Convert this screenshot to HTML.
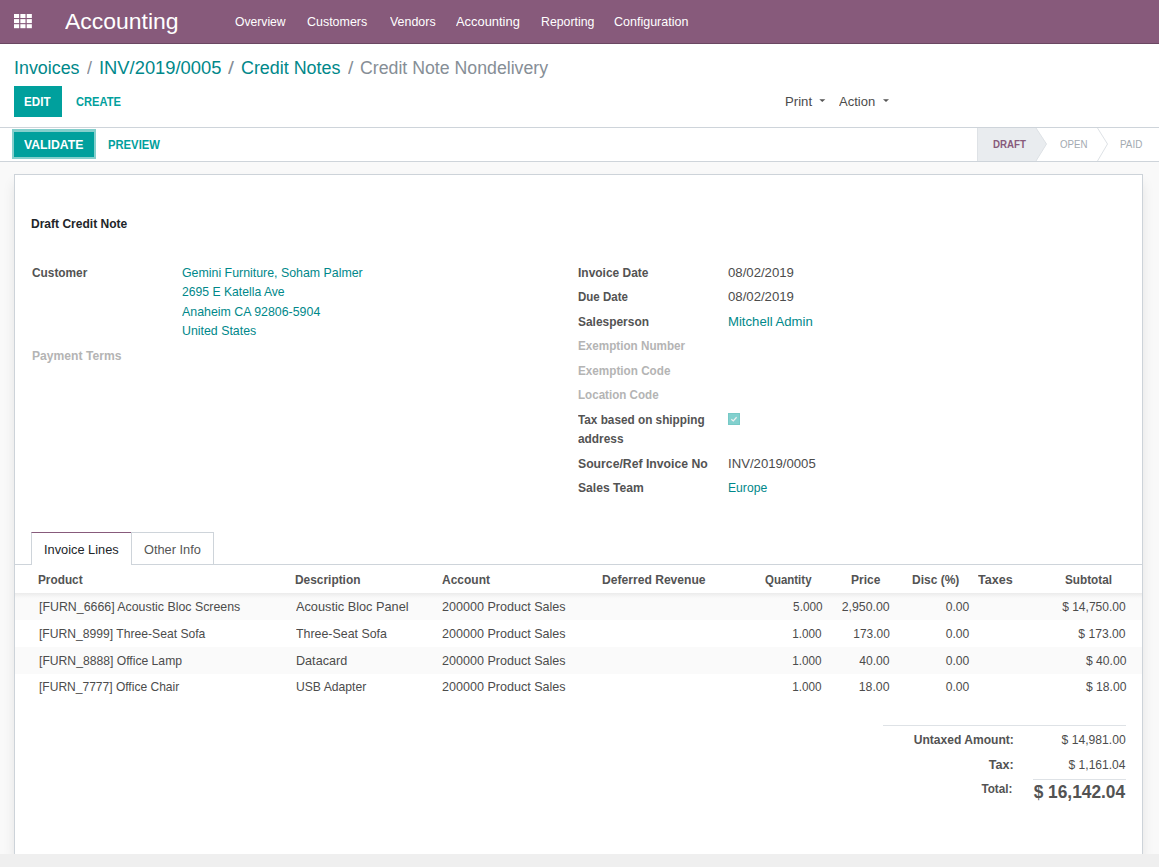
<!DOCTYPE html>
<html><head><meta charset="utf-8"><title>Accounting</title>
<style>
html,body{margin:0;padding:0;}
body{width:1159px;height:867px;overflow:hidden;position:relative;background:#fff;font-family:"Liberation Sans",sans-serif;}
.t{position:absolute;white-space:nowrap;}
.b{position:absolute;}
</style></head><body>
<!-- navbar -->
<div class="b" style="left:0;top:0;width:1159px;height:43px;background:#875A7B;border-bottom:1px solid #6a4762;"></div>
<svg class="b" style="left:14px;top:14px" width="19" height="15" viewBox="0 0 19 15">
<g fill="#fff"><rect x="0.00" y="0.0" width="5.15" height="4"/><rect x="6.35" y="0.0" width="5.15" height="4"/><rect x="12.70" y="0.0" width="5.15" height="4"/><rect x="0.00" y="5.1" width="5.15" height="4"/><rect x="6.35" y="5.1" width="5.15" height="4"/><rect x="12.70" y="5.1" width="5.15" height="4"/><rect x="0.00" y="10.2" width="5.15" height="4"/><rect x="6.35" y="10.2" width="5.15" height="4"/><rect x="12.70" y="10.2" width="5.15" height="4"/></g></svg>
<!-- control panel -->
<div class="b" style="left:14px;top:86px;width:48px;height:31px;background:#00A09D;"></div>
<div class="b" style="left:0;top:127px;width:1159px;height:1px;background:#ced4da;"></div>
<svg class="b" style="left:818px;top:98px" width="80" height="6" viewBox="0 0 80 6">
<path d="M1.3 1.2 L7.3 1.2 L4.3 4.1 Z" fill="#555"/>
<path d="M65 1.2 L71 1.2 L68 4.1 Z" fill="#555"/>
</svg>
<!-- statusbar -->
<div class="b" style="left:12px;top:129px;width:84px;height:30px;background:#84cfcc;"></div>
<div class="b" style="left:14px;top:132px;width:80px;height:25px;background:#00A09D;"></div>
<div class="b" style="left:0;top:161px;width:1159px;height:1px;background:#ced4da;"></div>
<svg class="b" style="left:960px;top:128px" width="199" height="33" viewBox="0 0 199 33">
<path d="M17.5 0 L76 0 L86.5 16 L76 33 L17.5 33 Z" fill="#e9ecef"/>
<path d="M17.5 0 L17.5 33" stroke="#dee2e6" stroke-width="1"/>
<path d="M76 0 L86.5 16 L76 33" fill="none" stroke="#dde1e5" stroke-width="1"/>
<path d="M137.5 0 L147.5 16 L137.5 33" fill="none" stroke="#dee2e6" stroke-width="1"/>
</svg>
<!-- sheet bg -->
<div class="b" style="left:0;top:162px;width:1159px;height:692px;background:#f9f9f9;"></div>
<div class="b" style="left:14px;top:174px;width:1127px;height:680px;background:#fff;border:1px solid #cdd3d9;border-bottom:none;box-shadow:0 8px 12px -1px rgba(0,0,0,0.1);"></div>
<div class="b" style="left:0;top:854px;width:1159px;height:13px;background:#efefef;"></div>
<!-- checkbox -->
<svg class="b" style="left:728px;top:413px" width="12" height="12" viewBox="0 0 12 12">
<rect x="0.5" y="0.5" width="11" height="11" fill="#82d0ce" stroke="#76c9c6" stroke-width="1"/>
<path d="M3.3 6.3 L5.3 7.9 L8.6 4.3" fill="none" stroke="#f0f0f0" stroke-width="1.3"/>
</svg>
<!-- tabs -->
<div class="b" style="left:15px;top:564px;width:1127px;height:1px;background:#ced4da;"></div>
<div class="b" style="left:31px;top:532px;width:99px;height:32px;background:#fff;border:1px solid #ced4da;border-top:1px solid #875A7B;border-bottom:none;height:32px;"></div>
<div class="b" style="left:131px;top:532px;width:82px;height:32px;border:1px solid #ced4da;border-left:none;border-bottom:none;"></div>
<!-- table -->
<div class="b" style="left:15px;top:593px;width:1127px;height:27px;background:linear-gradient(#ebebeb 0px,#f7f7f7 4px,#fafafa 6px,#fafafa 27px);"></div>
<div class="b" style="left:15px;top:646.5px;width:1127px;height:27px;background:#fafafa;"></div>
<!-- totals -->
<div class="b" style="left:883px;top:725px;width:243px;height:1px;background:#dee2e6;"></div>
<div class="b" style="left:1033px;top:779px;width:93px;height:1px;background:#dee2e6;"></div>
<div class="t" style="top:11.08px;font-size:22px;line-height:22px;color:#fff;left:65.20px;transform-origin:0 0;transform:scaleX(1.0428);">Accounting</div>
<div class="t" style="top:15.20px;font-size:13px;line-height:13px;color:#fff;left:235.40px;transform-origin:0 0;transform:scaleX(0.9341);">Overview</div>
<div class="t" style="top:15.20px;font-size:13px;line-height:13px;color:#fff;left:307.40px;transform-origin:0 0;transform:scaleX(0.9581);">Customers</div>
<div class="t" style="top:15.20px;font-size:13px;line-height:13px;color:#fff;left:389.60px;transform-origin:0 0;transform:scaleX(0.9560);">Vendors</div>
<div class="t" style="top:15.20px;font-size:13px;line-height:13px;color:#fff;left:456.20px;transform-origin:0 0;transform:scaleX(0.9924);">Accounting</div>
<div class="t" style="top:15.20px;font-size:13px;line-height:13px;color:#fff;left:540.60px;transform-origin:0 0;transform:scaleX(0.9466);">Reporting</div>
<div class="t" style="top:15.20px;font-size:13px;line-height:13px;color:#fff;left:614.40px;transform-origin:0 0;transform:scaleX(0.9619);">Configuration</div>
<div class="t" style="top:58.56px;font-size:18px;line-height:18px;color:#00888A;left:13.60px;transform-origin:0 0;transform:scaleX(0.9917);">Invoices</div>
<div class="t" style="top:58.56px;font-size:18px;line-height:18px;color:#868e96;left:87.00px;transform-origin:0 0;transform:scaleX(0.9921);">/</div>
<div class="t" style="top:58.56px;font-size:18px;line-height:18px;color:#00888A;left:98.80px;transform-origin:0 0;transform:scaleX(1.0192);">INV/2019/0005</div>
<div class="t" style="top:58.56px;font-size:18px;line-height:18px;color:#868e96;left:228.00px;transform-origin:0 0;transform:scaleX(1.1905);">/</div>
<div class="t" style="top:58.56px;font-size:18px;line-height:18px;color:#00888A;left:241.40px;transform-origin:0 0;transform:scaleX(0.9937);">Credit Notes</div>
<div class="t" style="top:58.56px;font-size:18px;line-height:18px;color:#868e96;left:347.60px;transform-origin:0 0;transform:scaleX(1.0738);">/</div>
<div class="t" style="top:58.56px;font-size:18px;line-height:18px;color:#868e96;left:360.40px;transform-origin:0 0;transform:scaleX(0.9843);">Credit Note Nondelivery</div>
<div class="t" style="top:95.20px;font-size:13px;line-height:13px;color:#fff;font-weight:bold;left:24.40px;transform-origin:0 0;transform:scaleX(0.8949);">EDIT</div>
<div class="t" style="top:95.20px;font-size:13px;line-height:13px;color:#00A09D;font-weight:bold;left:76.40px;transform-origin:0 0;transform:scaleX(0.8561);">CREATE</div>
<div class="t" style="top:94.80px;font-size:13px;line-height:13px;color:#4c4c4c;left:785.40px;transform-origin:0 0;transform:scaleX(1.0128);">Print</div>
<div class="t" style="top:94.80px;font-size:13px;line-height:13px;color:#4c4c4c;left:839.20px;transform-origin:0 0;transform:scaleX(1.0019);">Action</div>
<div class="t" style="top:138.00px;font-size:13px;line-height:13px;color:#fff;font-weight:bold;left:24.20px;transform-origin:0 0;transform:scaleX(0.9414);">VALIDATE</div>
<div class="t" style="top:138.00px;font-size:13px;line-height:13px;color:#00A09D;font-weight:bold;left:107.80px;transform-origin:0 0;transform:scaleX(0.8651);">PREVIEW</div>
<div class="t" style="top:139.27px;font-size:11.5px;line-height:11.5px;color:#875A7B;font-weight:bold;left:993.40px;transform-origin:0 0;transform:scaleX(0.8465);">DRAFT</div>
<div class="t" style="top:139.27px;font-size:11.5px;line-height:11.5px;color:#a3aab1;left:1059.60px;transform-origin:0 0;transform:scaleX(0.8424);">OPEN</div>
<div class="t" style="top:139.27px;font-size:11.5px;line-height:11.5px;color:#a3aab1;left:1120.20px;transform-origin:0 0;transform:scaleX(0.8606);">PAID</div>
<div class="t" style="top:216.90px;font-size:13px;line-height:13px;color:#212529;font-weight:bold;left:31.20px;transform-origin:0 0;transform:scaleX(0.9250);">Draft Credit Note</div>
<div class="t" style="top:265.70px;font-size:13px;line-height:13px;color:#535353;font-weight:bold;left:31.60px;transform-origin:0 0;transform:scaleX(0.9118);">Customer</div>
<div class="t" style="top:348.60px;font-size:13px;line-height:13px;color:#b4b4b4;font-weight:bold;left:31.60px;transform-origin:0 0;transform:scaleX(0.9331);">Payment Terms</div>
<div class="t" style="top:265.70px;font-size:13px;line-height:13px;color:#00888A;left:181.60px;transform-origin:0 0;transform:scaleX(0.9508);">Gemini Furniture, Soham Palmer</div>
<div class="t" style="top:284.70px;font-size:13px;line-height:13px;color:#00888A;left:181.60px;transform-origin:0 0;transform:scaleX(0.9363);">2695 E Katella Ave</div>
<div class="t" style="top:304.60px;font-size:13px;line-height:13px;color:#00888A;left:181.60px;transform-origin:0 0;transform:scaleX(0.9517);">Anaheim CA 92806-5904</div>
<div class="t" style="top:323.50px;font-size:13px;line-height:13px;color:#00888A;left:181.60px;transform-origin:0 0;transform:scaleX(0.9513);">United States</div>
<div class="t" style="top:266.20px;font-size:13px;line-height:13px;color:#535353;font-weight:bold;left:578.40px;transform-origin:0 0;transform:scaleX(0.9201);">Invoice Date</div>
<div class="t" style="top:290.30px;font-size:13px;line-height:13px;color:#535353;font-weight:bold;left:578.40px;transform-origin:0 0;transform:scaleX(0.8848);">Due Date</div>
<div class="t" style="top:315.00px;font-size:13px;line-height:13px;color:#535353;font-weight:bold;left:578.40px;transform-origin:0 0;transform:scaleX(0.9179);">Salesperson</div>
<div class="t" style="top:339.30px;font-size:13px;line-height:13px;color:#b4b4b4;font-weight:bold;left:578.40px;transform-origin:0 0;transform:scaleX(0.8984);">Exemption Number</div>
<div class="t" style="top:364.00px;font-size:13px;line-height:13px;color:#b4b4b4;font-weight:bold;left:578.40px;transform-origin:0 0;transform:scaleX(0.9013);">Exemption Code</div>
<div class="t" style="top:387.80px;font-size:13px;line-height:13px;color:#b4b4b4;font-weight:bold;left:578.40px;transform-origin:0 0;transform:scaleX(0.8928);">Location Code</div>
<div class="t" style="top:412.60px;font-size:13px;line-height:13px;color:#535353;font-weight:bold;left:578.40px;transform-origin:0 0;transform:scaleX(0.9054);">Tax based on shipping</div>
<div class="t" style="top:432.30px;font-size:13px;line-height:13px;color:#535353;font-weight:bold;left:578.40px;transform-origin:0 0;transform:scaleX(0.9136);">address</div>
<div class="t" style="top:457.00px;font-size:13px;line-height:13px;color:#535353;font-weight:bold;left:578.40px;transform-origin:0 0;transform:scaleX(0.9400);">Source/Ref Invoice No</div>
<div class="t" style="top:481.20px;font-size:13px;line-height:13px;color:#535353;font-weight:bold;left:578.40px;transform-origin:0 0;transform:scaleX(0.9322);">Sales Team</div>
<div class="t" style="top:266.20px;font-size:13px;line-height:13px;color:#4c4c4c;left:728.20px;transform-origin:0 0;transform:scaleX(1.0132);">08/02/2019</div>
<div class="t" style="top:290.30px;font-size:13px;line-height:13px;color:#4c4c4c;left:728.20px;transform-origin:0 0;transform:scaleX(1.0132);">08/02/2019</div>
<div class="t" style="top:315.00px;font-size:13px;line-height:13px;color:#00888A;left:727.60px;transform-origin:0 0;transform:scaleX(1.0110);">Mitchell Admin</div>
<div class="t" style="top:457.00px;font-size:13px;line-height:13px;color:#4c4c4c;left:727.60px;transform-origin:0 0;transform:scaleX(1.0115);">INV/2019/0005</div>
<div class="t" style="top:481.20px;font-size:13px;line-height:13px;color:#00888A;left:727.60px;transform-origin:0 0;transform:scaleX(0.9349);">Europe</div>
<div class="t" style="top:543.20px;font-size:13px;line-height:13px;color:#212529;left:44.22px;transform-origin:0 0;transform:scaleX(0.9836);">Invoice Lines</div>
<div class="t" style="top:543.20px;font-size:13px;line-height:13px;color:#555;left:144.12px;transform-origin:0 0;transform:scaleX(0.9837);">Other Info</div>
<div class="t" style="top:573.40px;font-size:13px;line-height:13px;color:#535353;font-weight:bold;left:38.20px;transform-origin:0 0;transform:scaleX(0.9078);">Product</div>
<div class="t" style="top:573.40px;font-size:13px;line-height:13px;color:#535353;font-weight:bold;left:295.40px;transform-origin:0 0;transform:scaleX(0.9154);">Description</div>
<div class="t" style="top:573.40px;font-size:13px;line-height:13px;color:#535353;font-weight:bold;left:442.40px;transform-origin:0 0;transform:scaleX(0.9223);">Account</div>
<div class="t" style="top:573.40px;font-size:13px;line-height:13px;color:#535353;font-weight:bold;left:602.20px;transform-origin:0 0;transform:scaleX(0.9310);">Deferred Revenue</div>
<div class="t" style="top:573.40px;font-size:13px;line-height:13px;color:#535353;font-weight:bold;left:765.40px;transform-origin:0 0;transform:scaleX(0.8820);">Quantity</div>
<div class="t" style="top:573.40px;font-size:13px;line-height:13px;color:#535353;font-weight:bold;left:850.60px;transform-origin:0 0;transform:scaleX(0.9235);">Price</div>
<div class="t" style="top:573.40px;font-size:13px;line-height:13px;color:#535353;font-weight:bold;left:912.40px;transform-origin:0 0;transform:scaleX(0.9232);">Disc (%)</div>
<div class="t" style="top:573.40px;font-size:13px;line-height:13px;color:#535353;font-weight:bold;left:978.20px;transform-origin:0 0;transform:scaleX(0.9660);">Taxes</div>
<div class="t" style="top:573.40px;font-size:13px;line-height:13px;color:#535353;font-weight:bold;left:1065.20px;transform-origin:0 0;transform:scaleX(0.9038);">Subtotal</div>
<div class="t" style="top:599.90px;font-size:13px;line-height:13px;color:#4c4c4c;left:38.60px;transform-origin:0 0;transform:scaleX(0.9507);">[FURN_6666] Acoustic Bloc Screens</div>
<div class="t" style="top:599.90px;font-size:13px;line-height:13px;color:#4c4c4c;left:295.60px;transform-origin:0 0;transform:scaleX(0.9803);">Acoustic Bloc Panel</div>
<div class="t" style="top:599.90px;font-size:13px;line-height:13px;color:#4c4c4c;left:442.40px;transform-origin:0 0;transform:scaleX(0.9663);">200000 Product Sales</div>
<div class="t" style="top:599.90px;font-size:13px;line-height:13px;color:#4c4c4c;right:336.37px;transform-origin:100% 0;transform:scaleX(0.9049);">5.000</div>
<div class="t" style="top:599.90px;font-size:13px;line-height:13px;color:#4c4c4c;right:268.97px;transform-origin:100% 0;transform:scaleX(0.9476);">2,950.00</div>
<div class="t" style="top:599.90px;font-size:13px;line-height:13px;color:#4c4c4c;right:189.25px;transform-origin:100% 0;transform:scaleX(0.9336);">0.00</div>
<div class="t" style="top:599.90px;font-size:13px;line-height:13px;color:#4c4c4c;right:33.57px;transform-origin:100% 0;transform:scaleX(0.9253);">$ 14,750.00</div>
<div class="t" style="top:626.60px;font-size:13px;line-height:13px;color:#4c4c4c;left:38.60px;transform-origin:0 0;transform:scaleX(0.9334);">[FURN_8999] Three-Seat Sofa</div>
<div class="t" style="top:626.60px;font-size:13px;line-height:13px;color:#4c4c4c;left:295.60px;transform-origin:0 0;transform:scaleX(0.9527);">Three-Seat Sofa</div>
<div class="t" style="top:626.60px;font-size:13px;line-height:13px;color:#4c4c4c;left:442.40px;transform-origin:0 0;transform:scaleX(0.9663);">200000 Product Sales</div>
<div class="t" style="top:626.60px;font-size:13px;line-height:13px;color:#4c4c4c;right:336.97px;transform-origin:100% 0;transform:scaleX(0.9034);">1.000</div>
<div class="t" style="top:626.60px;font-size:13px;line-height:13px;color:#4c4c4c;right:269.62px;transform-origin:100% 0;transform:scaleX(0.9153);">173.00</div>
<div class="t" style="top:626.60px;font-size:13px;line-height:13px;color:#4c4c4c;right:189.25px;transform-origin:100% 0;transform:scaleX(0.9336);">0.00</div>
<div class="t" style="top:626.60px;font-size:13px;line-height:13px;color:#4c4c4c;right:32.97px;transform-origin:100% 0;transform:scaleX(0.9335);">$ 173.00</div>
<div class="t" style="top:653.80px;font-size:13px;line-height:13px;color:#4c4c4c;left:38.60px;transform-origin:0 0;transform:scaleX(0.9351);">[FURN_8888] Office Lamp</div>
<div class="t" style="top:653.80px;font-size:13px;line-height:13px;color:#4c4c4c;left:295.60px;transform-origin:0 0;transform:scaleX(0.9701);">Datacard</div>
<div class="t" style="top:653.80px;font-size:13px;line-height:13px;color:#4c4c4c;left:442.40px;transform-origin:0 0;transform:scaleX(0.9663);">200000 Product Sales</div>
<div class="t" style="top:653.80px;font-size:13px;line-height:13px;color:#4c4c4c;right:336.97px;transform-origin:100% 0;transform:scaleX(0.9034);">1.000</div>
<div class="t" style="top:653.80px;font-size:13px;line-height:13px;color:#4c4c4c;right:269.57px;transform-origin:100% 0;transform:scaleX(0.9342);">40.00</div>
<div class="t" style="top:653.80px;font-size:13px;line-height:13px;color:#4c4c4c;right:189.25px;transform-origin:100% 0;transform:scaleX(0.9336);">0.00</div>
<div class="t" style="top:653.80px;font-size:13px;line-height:13px;color:#4c4c4c;right:33.05px;transform-origin:100% 0;transform:scaleX(0.9316);">$ 40.00</div>
<div class="t" style="top:680.00px;font-size:13px;line-height:13px;color:#4c4c4c;left:38.60px;transform-origin:0 0;transform:scaleX(0.9254);">[FURN_7777] Office Chair</div>
<div class="t" style="top:680.00px;font-size:13px;line-height:13px;color:#4c4c4c;left:295.60px;transform-origin:0 0;transform:scaleX(0.9343);">USB Adapter</div>
<div class="t" style="top:680.00px;font-size:13px;line-height:13px;color:#4c4c4c;left:442.40px;transform-origin:0 0;transform:scaleX(0.9663);">200000 Product Sales</div>
<div class="t" style="top:680.00px;font-size:13px;line-height:13px;color:#4c4c4c;right:336.97px;transform-origin:100% 0;transform:scaleX(0.9034);">1.000</div>
<div class="t" style="top:680.00px;font-size:13px;line-height:13px;color:#4c4c4c;right:268.97px;transform-origin:100% 0;transform:scaleX(0.9467);">18.00</div>
<div class="t" style="top:680.00px;font-size:13px;line-height:13px;color:#4c4c4c;right:189.25px;transform-origin:100% 0;transform:scaleX(0.9336);">0.00</div>
<div class="t" style="top:680.00px;font-size:13px;line-height:13px;color:#4c4c4c;right:33.05px;transform-origin:100% 0;transform:scaleX(0.9316);">$ 18.00</div>
<div class="t" style="top:732.60px;font-size:13px;line-height:13px;color:#535353;font-weight:bold;right:145.65px;transform-origin:100% 0;transform:scaleX(0.9283);">Untaxed Amount:</div>
<div class="t" style="top:732.80px;font-size:13px;line-height:13px;color:#4c4c4c;right:32.97px;transform-origin:100% 0;transform:scaleX(0.9339);">$ 14,981.00</div>
<div class="t" style="top:758.30px;font-size:13px;line-height:13px;color:#535353;font-weight:bold;right:145.58px;transform-origin:100% 0;transform:scaleX(0.9679);">Tax:</div>
<div class="t" style="top:758.30px;font-size:13px;line-height:13px;color:#4c4c4c;right:33.65px;transform-origin:100% 0;transform:scaleX(0.9255);">$ 1,161.04</div>
<div class="t" style="top:782.00px;font-size:13px;line-height:13px;color:#535353;font-weight:bold;right:146.23px;transform-origin:100% 0;transform:scaleX(0.9018);">Total:</div>
<div class="t" style="top:782.66px;font-size:18px;line-height:18px;color:#535353;font-weight:bold;right:34.14px;transform-origin:100% 0;transform:scaleX(0.9616);">$ 16,142.04</div>
</body></html>
